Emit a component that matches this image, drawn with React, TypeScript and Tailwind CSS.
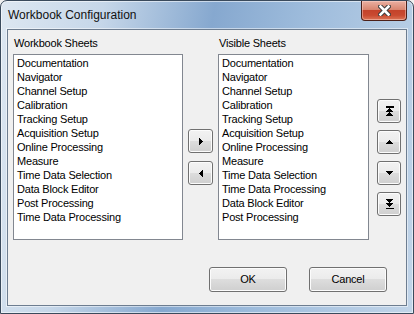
import type { ReactNode } from "react";

const workbookSheets = [
  "Documentation",
  "Navigator",
  "Channel Setup",
  "Calibration",
  "Tracking Setup",
  "Acquisition Setup",
  "Online Processing",
  "Measure",
  "Time Data Selection",
  "Data Block Editor",
  "Post Processing",
  "Time Data Processing",
];

const visibleSheets = [
  "Documentation",
  "Navigator",
  "Channel Setup",
  "Calibration",
  "Tracking Setup",
  "Acquisition Setup",
  "Online Processing",
  "Measure",
  "Time Data Selection",
  "Time Data Processing",
  "Data Block Editor",
  "Post Processing",
];

function WinButton({ className, children }: { className: string; children: ReactNode }) {
  return (
    <button
      type="button"
      className={`flex items-center justify-center rounded-[3px] border border-[#707070] bg-[linear-gradient(#f2f2f2_0%,#ebebeb_50%,#dddddd_50%,#cfcfcf_100%)] shadow-[inset_0_0_0_1px_#fcfcfc] text-black ${className}`}
    >
      {children}
    </button>
  );
}

function ListBox({ items, width }: { items: string[]; width: string }) {
  return (
    <div className={`${width} h-[186px] border border-[#828790] bg-white pt-[1px] pl-[3px]`}>
      {items.map((item) => (
        <div key={item} className="leading-[14px] whitespace-nowrap">
          {item}
        </div>
      ))}
    </div>
  );
}

const Icon = {
  right: (
    <svg width="4" height="7" viewBox="0 0 4 7" shapeRendering="crispEdges">
      <polygon points="0,0 4,3.5 0,7" fill="#000" />
    </svg>
  ),
  left: (
    <svg width="4" height="7" viewBox="0 0 4 7" shapeRendering="crispEdges">
      <polygon points="4,0 0,3.5 4,7" fill="#000" />
    </svg>
  ),
  top: (
    <svg width="9" height="10" viewBox="0 0 9 10" shapeRendering="crispEdges">
      <rect x="0.5" y="0" width="8" height="1.5" fill="#000" />
      <polygon points="0.5,6 4.5,2 8.5,6" fill="#000" />
      <polygon points="0.5,10 4.5,6 8.5,10" fill="#000" />
    </svg>
  ),
  up: (
    <svg width="7" height="4" viewBox="0 0 7 4" shapeRendering="crispEdges">
      <polygon points="0,4 3.5,0 7,4" fill="#000" />
    </svg>
  ),
  down: (
    <svg width="7" height="4" viewBox="0 0 7 4" shapeRendering="crispEdges">
      <polygon points="0,0 3.5,4 7,0" fill="#000" />
    </svg>
  ),
  bottom: (
    <svg width="9" height="10" viewBox="0 0 9 10" shapeRendering="crispEdges">
      <polygon points="0.5,0 4.5,4 8.5,0" fill="#000" />
      <polygon points="0.5,4 4.5,8 8.5,4" fill="#000" />
      <rect x="0.5" y="8.5" width="8" height="1.5" fill="#000" />
    </svg>
  ),
};

export default function App() {
  return (
    <div className="w-[414px] h-[314px] bg-[#f0f0f0]">
      {/* window frame */}
      <div className="flex h-full w-full flex-col rounded-t-[7px] border border-[#3a4a5c] bg-[linear-gradient(100deg,#dde7f1_0%,#c6d7e9_22%,#86a8cf_46%,#9ebcdc_66%,#c2d5e9_100%)] px-[6px] pb-[7px] shadow-[inset_0_0_0_1px_rgba(255,255,255,0.55)]">
        {/* title bar */}
        <div className="flex h-[28px] shrink-0 items-start justify-between pl-[1px]">
          <span className="pt-[7px] text-[12px] leading-[15px] text-[#111] [font-family:'Liberation_Sans',Arial,sans-serif]">
            Workbook Configuration
          </span>
          <div className="flex h-[20px] w-[46px] items-center justify-center rounded-b-[4px] border border-t-0 border-[#4b2019] bg-[linear-gradient(#eab0a2_0%,#d98670_45%,#c4432b_50%,#c94a30_75%,#dc7456_100%)] shadow-[inset_0_0_0_1px_rgba(255,220,210,0.45)]">
            <svg width="13" height="11" viewBox="0 0 13 11">
              <path d="M2.5 1.5 L10.5 9.5 M10.5 1.5 L2.5 9.5" stroke="#3c3c3c" strokeWidth="4.6" strokeLinecap="square" />
              <path d="M2.5 1.5 L10.5 9.5 M10.5 1.5 L2.5 9.5" stroke="#fff" strokeWidth="2.6" strokeLinecap="square" />
            </svg>
          </div>
        </div>

        {/* client area */}
        <div className="flex flex-1 flex-col border border-[#6d7d90] bg-[#f0f0f0] pl-[5px] pt-[7px] text-[11px] tracking-[-0.2px] text-black shadow-[0_0_0_1px_rgba(255,255,255,0.5)] [font-family:'Liberation_Sans',Arial,sans-serif]">
          <div className="flex">
            <div className="flex flex-col">
              <div className="mb-[4px] pl-[1px] leading-[13px]">Workbook Sheets</div>
              <ListBox items={workbookSheets} width="w-[170px]" />
            </div>

            <div className="ml-[5px] flex flex-col gap-[8px] pt-[92px]">
              <WinButton className="h-[24px] w-[25px]">{Icon.right}</WinButton>
              <WinButton className="h-[24px] w-[25px]">{Icon.left}</WinButton>
            </div>

            <div className="ml-[5px] flex flex-col">
              <div className="mb-[4px] pl-[1px] leading-[13px]">Visible Sheets</div>
              <ListBox items={visibleSheets} width="w-[151px]" />
            </div>

            <div className="ml-[8px] flex flex-col gap-[7px] pt-[62px]">
              <WinButton className="h-[24px] w-[24px]">{Icon.top}</WinButton>
              <WinButton className="h-[24px] w-[24px]">{Icon.up}</WinButton>
              <WinButton className="h-[24px] w-[24px]">{Icon.down}</WinButton>
              <WinButton className="h-[24px] w-[24px]">{Icon.bottom}</WinButton>
            </div>
          </div>

          <div className="mt-[27px] flex justify-end gap-[22px] pr-[19px]">
            <WinButton className="h-[25px] w-[78px]">OK</WinButton>
            <WinButton className="h-[25px] w-[78px]">Cancel</WinButton>
          </div>
        </div>
      </div>
    </div>
  );
}
